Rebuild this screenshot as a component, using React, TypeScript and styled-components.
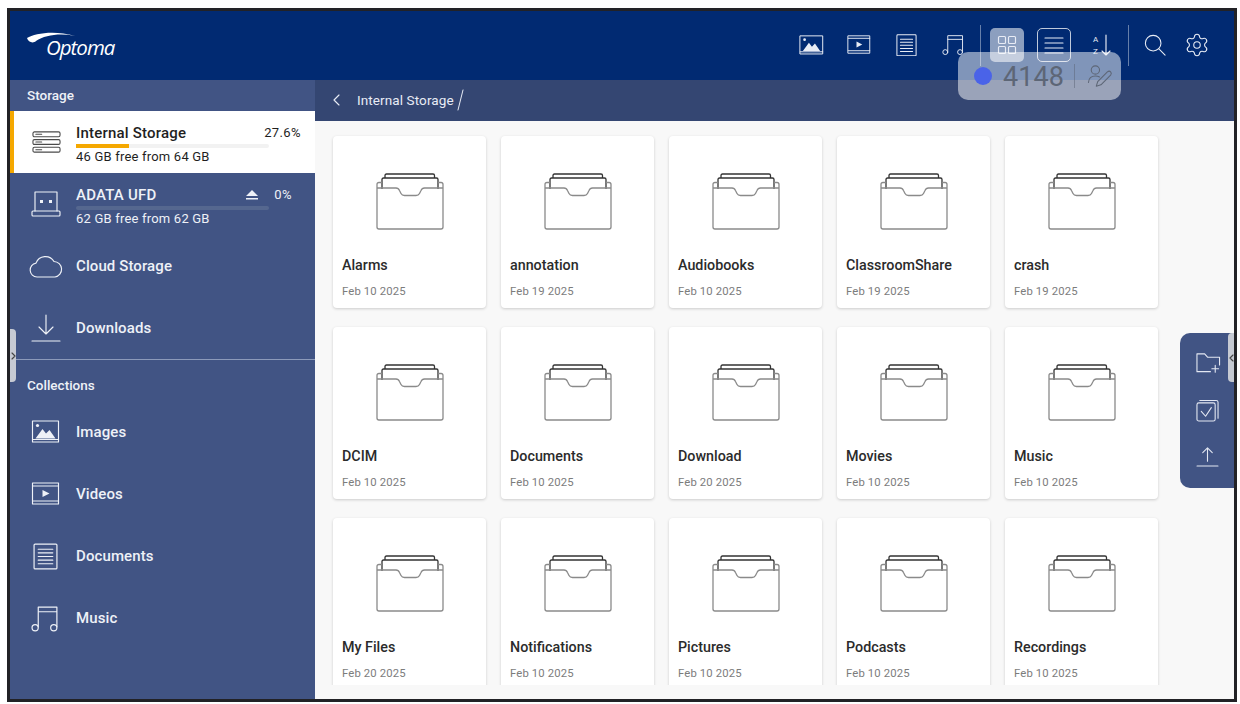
import React from 'react';
import styled, { createGlobalStyle } from 'styled-components';
import { Settings } from 'lucide-react';

const GlobalStyle = createGlobalStyle`
  html, body {
    margin: 0;
    padding: 0;
    background: #fff;
    font-family: Roboto, "Liberation Sans", sans-serif;
  }
`;

const Frame = styled.div`
  position: relative;
  width: 1224px;
  height: 688px;
  margin: 8px 0 0 7px;
  border: 3px solid #222226;
  display: flex;
  flex-direction: column;
  overflow: hidden;
  background: #f8f8f8;
`;

const Header = styled.header`
  height: 69px;
  flex: none;
  background: #012a72;
  display: flex;
  align-items: center;
  padding-left: 16px;
  color: #e8ecf5;
`;

const Logo = styled.div`
  position: relative;
  width: 100px;
  height: 44px;
`;

const Swoosh = styled.svg`
  position: absolute;
  left: 0;
  top: 6px;
`;

const LogoText = styled.span`
  position: absolute;
  left: 20px;
  top: 9px;
  font: italic 500 20.5px/28px "Open Sans", sans-serif;
  letter-spacing: -1px;
  color: #fff;
`;

const Toolbar = styled.div`
  margin-left: auto;
  display: flex;
  align-items: center;
  padding: 0 24px 1px 0;
  box-sizing: border-box;
  height: 100%;
`;

const ToolSlot = styled.div<{ $w: number; $gap?: number }>`
  width: ${(p) => p.$w}px;
  margin-right: ${(p) => p.$gap ?? 0}px;
  display: flex;
  justify-content: center;
  align-items: center;
  flex: none;

  svg {
    width: 100%;
    height: auto;
    display: block;
  }
`;

const ToolDivider = styled.div`
  width: 1px;
  height: 41px;
  background: rgba(255, 255, 255, 0.4);
  flex: none;
`;

const ViewButton = styled.div<{ $mode: 'filled' | 'outlined' }>`
  width: 34px;
  height: 34px;
  box-sizing: border-box;
  border-radius: 5px;
  display: flex;
  align-items: center;
  justify-content: center;
  flex: none;
  background: ${(p) => (p.$mode === 'filled' ? 'rgba(255,255,255,0.55)' : 'transparent')};
  border: ${(p) => (p.$mode === 'outlined' ? '1px solid rgba(255,255,255,0.75)' : 'none')};
`;

const Body = styled.div`
  flex: 1;
  display: flex;
  min-height: 0;
`;

const Sidebar = styled.aside`
  width: 305px;
  flex: none;
  background: #415484;
  color: #eef1f7;
  display: flex;
  flex-direction: column;
`;

const SectionTitle = styled.div<{ $h: number; $pt?: number; $pb?: number }>`
  height: ${(p) => p.$h}px;
  padding: ${(p) => p.$pt ?? 0}px 0 ${(p) => p.$pb ?? 0}px 17px;
  box-sizing: border-box;
  display: flex;
  align-items: center;
  font-size: 13.5px;
  font-weight: 500;
  flex: none;
`;

const NavRow = styled.div<{ $active?: boolean }>`
  height: 62px;
  flex: none;
  box-sizing: border-box;
  display: flex;
  align-items: center;
  background: ${(p) => (p.$active ? '#fff' : 'transparent')};
  color: ${(p) => (p.$active ? '#1f1f1f' : '#eef1f7')};
  border-left: 4px solid ${(p) => (p.$active ? '#f5a800' : 'transparent')};
`;

const NavIcon = styled.div<{ $pl?: number }>`
  width: 62px;
  padding-left: ${(p) => p.$pl ?? 17}px;
  box-sizing: border-box;
  display: flex;
  justify-content: flex-start;
  flex: none;
`;

const NavLabel = styled.span`
  font-size: 15px;
  font-weight: 500;
  letter-spacing: 0.1px;
`;

const StorageInfo = styled.div`
  width: 225px;
  padding-top: 4px;
  display: flex;
  flex-direction: column;
`;

const StorageTop = styled.div`
  display: flex;
  align-items: center;
  height: 20px;
  font-size: 15px;
  font-weight: 500;
  letter-spacing: 0.2px;
`;

const Percent = styled.span<{ $w: number; $right?: number; $tail?: boolean }>`
  margin-left: ${(p) => (p.$tail ? '0' : 'auto')};
  margin-right: ${(p) => p.$right ?? 0}px;
  width: ${(p) => p.$w}px;
  text-align: right;
  font-size: 13px;
  font-weight: 400;
  letter-spacing: 0.4px;
`;

const Meter = styled.div<{ $active?: boolean }>`
  width: 193px;
  height: 4px;
  margin-top: 1px;
  background: ${(p) => (p.$active ? '#f2f2f2' : '#55678f')};
  border-radius: 2px;
`;

const MeterFill = styled.div`
  height: 100%;
  background: #f5a800;
`;

const StorageSub = styled.div`
  font-size: 13px;
  line-height: 18px;
  letter-spacing: 0.2px;
`;

const Eject = styled.span`
  margin-left: auto;
  width: 14px;
  height: 10px;
  display: flex;
`;

const SideRule = styled.div`
  height: 1px;
  background: #8c9aba;
  flex: none;
`;

const Main = styled.main`
  flex: 1;
  min-width: 0;
  display: flex;
  flex-direction: column;
`;

const Breadcrumb = styled.div`
  height: 41px;
  flex: none;
  background: #344672;
  color: #e8ecf5;
  display: flex;
  align-items: center;
  padding: 0 0 1px 17px;
  box-sizing: border-box;
  font-size: 13.5px;
  letter-spacing: 0.1px;
`;

const CrumbText = styled.span`
  margin: 0 3px 0 17px;
`;

const FileArea = styled.div`
  height: 564px;
  overflow: hidden;
  padding: 15px 0 0 18px;
  box-sizing: border-box;
`;

const FileGrid = styled.div`
  display: grid;
  grid-template-columns: repeat(5, 153px);
  grid-auto-rows: 172px;
  column-gap: 15px;
  row-gap: 19px;
`;

const Card = styled.div`
  background: #fff;
  border-radius: 4px;
  box-shadow: 0 1px 3px rgba(0, 0, 0, 0.18);
  display: flex;
  flex-direction: column;
  padding: 36px 9px 0;
  box-sizing: border-box;
`;

const FolderWrap = styled.div`
  display: flex;
  justify-content: center;
  height: 58px;
  flex: none;
`;

const CardName = styled.div`
  margin-top: 26px;
  font-size: 14.3px;
  line-height: 18px;
  font-weight: 500;
  color: #2b2b2b;
`;

const CardDate = styled.div`
  margin-top: 10px;
  font-size: 11.3px;
  line-height: 16px;
  color: #7c7c7c;
  letter-spacing: 0.15px;
`;

const ActionRail = styled.div`
  position: absolute;
  right: 0;
  top: 322px;
  width: 54px;
  height: 155px;
  background: #415484;
  border-radius: 10px 0 0 10px;
  color: #e3e7f2;
  display: flex;
  flex-direction: column;
  align-items: flex-start;
  padding: 19px 0 0 16px;
  box-sizing: border-box;
  gap: 25px;

  svg {
    display: block;
  }
`;

const Handle = styled.div<{ $side: 'left' | 'right' }>`
  position: absolute;
  width: 6px;
  height: ${(p) => (p.$side === 'left' ? 53 : 49)}px;
  top: ${(p) => (p.$side === 'left' ? 318 : 322)}px;
  ${(p) => (p.$side === 'left' ? 'left: 0;' : 'right: 0;')}
  background: #c6cad3;
  border-radius: ${(p) => (p.$side === 'left' ? '0 4px 4px 0' : '4px 0 0 4px')};
  display: flex;
  align-items: center;
  justify-content: center;
`;

const CodePill = styled.div`
  position: absolute;
  left: 948px;
  top: 41px;
  width: 163px;
  height: 48px;
  border-radius: 10px;
  background: rgba(255, 255, 255, 0.5);
  display: flex;
  align-items: center;
  padding-left: 16px;
  box-sizing: border-box;
  color: #5d6676;
`;

const PillDot = styled.span`
  width: 18px;
  height: 18px;
  border-radius: 50%;
  background: #4a63e8;
  flex: none;
`;

const PillCode = styled.span`
  margin: 2px 0 0 11px;
  font-size: 27px;
  line-height: 32px;
  letter-spacing: 0.1px;
`;

const PillRule = styled.span`
  width: 1px;
  height: 24px;
  margin: 0 12px 0 10px;
  background: rgba(90, 100, 118, 0.5);
`;

const stroke = {
  fill: 'none',
  stroke: 'currentColor',
  strokeWidth: 1.15,
  strokeLinecap: 'round' as const,
  strokeLinejoin: 'round' as const,
};

const ImageIcon = () => (
  <svg width="29" height="24" viewBox="0 0 28 24">
    <rect x="1" y="1" width="26" height="21" {...stroke} />
    <path d="M1 19.5H27" {...stroke} />
    <circle cx="6" cy="5.5" r="1.6" fill="currentColor" />
    <path d="M4 18.5L11 9l3.5 4.5L18 10l6 8.5z" fill="currentColor" />
  </svg>
);

const VideoIcon = () => (
  <svg width="29" height="24" viewBox="0 0 28 24">
    <rect x="1" y="1" width="26" height="21" {...stroke} />
    <path d="M1 4H27M1 19H27" {...stroke} />
    <path d="M11 8l7 3.5-7 3.5z" fill="currentColor" />
  </svg>
);

const DocIcon = () => (
  <svg width="25" height="27" viewBox="0 0 24 26">
    <rect x="1" y="1" width="22" height="24" rx="1" {...stroke} />
    <path d="M5 6H19M5 9.5H19M5 13H19M5 16.5H19M5 20H19" {...stroke} />
  </svg>
);

const MusicIcon = () => (
  <svg width="29" height="27" viewBox="0 0 28 26">
    <path d="M7 21V2H25V21M7 6.5H25" {...stroke} />
    <circle cx="4" cy="22" r="3" {...stroke} />
    <circle cx="22" cy="22" r="3" {...stroke} />
  </svg>
);

const GridIcon = () => (
  <svg width="20" height="20" viewBox="0 0 20 20">
    <rect x="1.5" y="1.5" width="7" height="7" rx="1" {...stroke} />
    <rect x="11.5" y="1.5" width="7" height="7" rx="1" {...stroke} />
    <rect x="1.5" y="11.5" width="7" height="7" rx="1" {...stroke} />
    <rect x="11.5" y="11.5" width="7" height="7" rx="1" {...stroke} />
  </svg>
);

const ListIcon = () => (
  <svg width="20" height="18" viewBox="0 0 20 18">
    <path d="M1 2H19M1 7H19M1 12H19M1 17H19" {...stroke} />
  </svg>
);

const SortIcon = () => (
  <svg width="20" height="24" viewBox="0 0 20 24">
    <text x="1" y="9" fontSize="8" fill="currentColor" fontFamily="Roboto, sans-serif">A</text>
    <text x="1" y="21" fontSize="8" fill="currentColor" fontFamily="Roboto, sans-serif">Z</text>
    <path d="M14 2V22M10 18l4 4 4-4" {...stroke} />
  </svg>
);

const SearchIcon = () => (
  <svg width="24" height="24" viewBox="0 0 24 24">
    <circle cx="10" cy="10" r="8.5" {...stroke} />
    <path d="M16 16l7 7" {...stroke} />
  </svg>
);

const ServerIcon = () => (
  <svg width="29" height="24" viewBox="0 0 30 24" color="#4a4a4a">
    {[1.5, 9.5, 17.5].map((y) => (
      <g key={y}>
        <rect x="1" y={y} width="28" height="5" rx="1.5" {...stroke} />
        <path d={`M4 ${y + 2.5}H10`} {...stroke} />
      </g>
    ))}
  </svg>
);

const UsbIcon = () => (
  <svg width="30" height="28" viewBox="0 0 30 28">
    <path d="M4 21V2H26V21" {...stroke} />
    <rect x="1" y="21" width="28" height="5" rx="1" {...stroke} />
    <rect x="9" y="10" width="3" height="3" fill="currentColor" />
    <rect x="18" y="10" width="3" height="3" fill="currentColor" />
  </svg>
);

const CloudIcon = () => (
  <svg width="34" height="24" viewBox="0 0 34 24">
    <path
      d="M8 23a7 7 0 0 1-1-13.900A10 10 0 0 1 25 7.500 7.800 7.800 0 0 1 26 23z"
      {...stroke}
    />
  </svg>
);

const DownloadIcon = () => (
  <svg width="30" height="28" viewBox="0 0 30 28">
    <path d="M15 1V20M8 13l7 7 7-7M1 27H29" {...stroke} />
  </svg>
);

const BackChevron = () => (
  <svg width="8" height="12" viewBox="0 0 8 12">
    <path d="M7 1L2 6l5 5" {...stroke} />
  </svg>
);

const CrumbSlash = () => (
  <svg width="7" height="22" viewBox="0 0 7 22">
    <path d="M6 1L1 21" {...stroke} strokeWidth={1} />
  </svg>
);

const EjectIcon = () => (
  <svg width="14" height="10" viewBox="0 0 14 10">
    <path d="M7 0l6 6H1z M1 8h12v1.500H1z" fill="currentColor" />
  </svg>
);

const FolderIcon = () => (
  <svg width="68" height="58" viewBox="0 0 68 58">
    <path
      d="M9 6V3.500Q9 2 10.500 2H57Q58.500 2 58.500 3.500V6"
      fill="none"
      stroke="#333"
      strokeWidth="1.3"
    />
    <path
      d="M6 17V7.500Q6 6 7.500 6H60.500Q62 6 62 7.500V17"
      fill="none"
      stroke="#333"
      strokeWidth="1.3"
    />
    <path
      d="M6 10.500H3Q1 10.500 1 12.500V55Q1 57 3 57H65Q67 57 67 55V12.500Q67 10.500 65 10.500H62"
      fill="none"
      stroke="#8a8a8a"
      strokeWidth="1.3"
    />
    <path
      d="M1 16H20Q22.500 16 23.500 18.500L25 21.500Q26 23.500 28.500 23.500H40Q42.500 23.500 43.500 21.500L45 18.500Q46 16 48.500 16H67"
      fill="none"
      stroke="#8a8a8a"
      strokeWidth="1.3"
    />
  </svg>
);

const NewFolderIcon = () => (
  <svg width="25" height="22" viewBox="0 0 26 22">
    <path d="M1 20V1.500H9l3 3.500H24.500V13M1 20H15" {...stroke} />
    <path d="M20 13.500V20.500M16.500 17H23.500" {...stroke} />
  </svg>
);

const SelectIcon = () => (
  <svg width="23" height="23" viewBox="0 0 24 24">
    <rect x="1" y="4" width="19" height="19" rx="2" {...stroke} />
    <path d="M4 1.500H21Q23 1.500 23 3.500V20" {...stroke} />
    <path d="M5.500 13l4.500 5 6-9" {...stroke} />
  </svg>
);

const UploadIcon = () => (
  <svg width="23" height="20" viewBox="0 0 24 21">
    <path d="M12 1V15M7 6l5-5 5 5M1 20H23" {...stroke} />
  </svg>
);

const AnnotateIcon = () => (
  <svg width="26" height="24" viewBox="0 0 28 26">
    <circle cx="9" cy="6.500" r="4.500" {...stroke} />
    <path d="M1.500 20Q2 13 9 13q2.500 0 4.500 1" {...stroke} />
    <path d="M10 24l1.500-5L22 8.500q2-1.500 3.500 0t0 3.500L15 22.500z" {...stroke} />
  </svg>
);

const SmallChevron = ({ dir }: { dir: 'left' | 'right' }) => (
  <svg width="5" height="8" viewBox="0 0 5 8" color="#444">
    <path d={dir === 'left' ? 'M4 1L1 4l3 3' : 'M1 1l3 3-3 3'} {...stroke} />
  </svg>
);

const folders = [
  ['Alarms', 'Feb 10 2025'],
  ['annotation', 'Feb 19 2025'],
  ['Audiobooks', 'Feb 10 2025'],
  ['ClassroomShare', 'Feb 19 2025'],
  ['crash', 'Feb 19 2025'],
  ['DCIM', 'Feb 10 2025'],
  ['Documents', 'Feb 10 2025'],
  ['Download', 'Feb 20 2025'],
  ['Movies', 'Feb 10 2025'],
  ['Music', 'Feb 10 2025'],
  ['My Files', 'Feb 20 2025'],
  ['Notifications', 'Feb 10 2025'],
  ['Pictures', 'Feb 10 2025'],
  ['Podcasts', 'Feb 10 2025'],
  ['Recordings', 'Feb 10 2025'],
];

const collections = [
  { label: 'Images', icon: <ImageIcon />, pl: 17 },
  { label: 'Videos', icon: <VideoIcon />, pl: 17 },
  { label: 'Documents', icon: <DocIcon />, pl: 19 },
  { label: 'Music', icon: <MusicIcon />, pl: 17 },
];

const App: React.FC = () => (
  <>
    <GlobalStyle />
    <Frame>
      <Header>
        <Logo>
          <Swoosh width="52" height="16" viewBox="0 0 52 16">
            <path d="M1 8C9 3 29 0 49 6 34 3 19 5 10 11 7 14 2 12 1 8z" fill="#fff" />
          </Swoosh>
          <LogoText>Optoma</LogoText>
        </Logo>
        <Toolbar>
          <ToolSlot $w={25} $gap={23}><ImageIcon /></ToolSlot>
          <ToolSlot $w={24} $gap={25}><VideoIcon /></ToolSlot>
          <ToolSlot $w={21} $gap={25}><DocIcon /></ToolSlot>
          <ToolSlot $w={23} $gap={15}><MusicIcon /></ToolSlot>
          <ToolDivider />
          <ToolSlot $w={9} />
          <ViewButton $mode="filled"><GridIcon /></ViewButton>
          <ToolSlot $w={13} />
          <ViewButton $mode="outlined"><ListIcon /></ViewButton>
          <ToolSlot $w={21} />
          <ToolSlot $w={20} $gap={16}><SortIcon /></ToolSlot>
          <ToolDivider />
          <ToolSlot $w={15} />
          <ToolSlot $w={22} $gap={18}><SearchIcon /></ToolSlot>
          <ToolSlot $w={26}><Settings strokeWidth={1} /></ToolSlot>
        </Toolbar>
      </Header>
      <Body>
        <Sidebar>
          <SectionTitle $h={31} $pb={2}>Storage</SectionTitle>
          <NavRow $active>
            <NavIcon $pl={18}><ServerIcon /></NavIcon>
            <StorageInfo>
              <StorageTop>
                Internal Storage
                <Percent $w={60}>27.6%</Percent>
              </StorageTop>
              <Meter $active><MeterFill style={{ width: '27.6%' }} /></Meter>
              <StorageSub>46 GB free from 64 GB</StorageSub>
            </StorageInfo>
          </NavRow>
          <NavRow>
            <NavIcon><UsbIcon /></NavIcon>
            <StorageInfo>
              <StorageTop>
                ADATA UFD
                <Eject><EjectIcon /></Eject>
                <Percent $w={33} $right={9} $tail>0%</Percent>
              </StorageTop>
              <Meter />
              <StorageSub>62 GB free from 62 GB</StorageSub>
            </StorageInfo>
          </NavRow>
          <NavRow>
            <NavIcon $pl={15}><CloudIcon /></NavIcon>
            <NavLabel>Cloud Storage</NavLabel>
          </NavRow>
          <NavRow>
            <NavIcon><DownloadIcon /></NavIcon>
            <NavLabel>Downloads</NavLabel>
          </NavRow>
          <SideRule />
          <SectionTitle $h={41} $pt={9}>Collections</SectionTitle>
          {collections.map((item) => (
            <NavRow key={item.label}>
              <NavIcon $pl={item.pl}>{item.icon}</NavIcon>
              <NavLabel>{item.label}</NavLabel>
            </NavRow>
          ))}
        </Sidebar>
        <Main>
          <Breadcrumb>
            <BackChevron />
            <CrumbText>Internal Storage</CrumbText>
            <CrumbSlash />
          </Breadcrumb>
          <FileArea>
            <FileGrid>
              {folders.map(([name, date]) => (
                <Card key={name}>
                  <FolderWrap><FolderIcon /></FolderWrap>
                  <CardName>{name}</CardName>
                  <CardDate>{date}</CardDate>
                </Card>
              ))}
            </FileGrid>
          </FileArea>
        </Main>
      </Body>
      <CodePill>
        <PillDot />
        <PillCode>4148</PillCode>
        <PillRule />
        <AnnotateIcon />
      </CodePill>
      <ActionRail>
        <NewFolderIcon />
        <SelectIcon />
        <UploadIcon />
      </ActionRail>
      <Handle $side="left"><SmallChevron dir="right" /></Handle>
      <Handle $side="right"><SmallChevron dir="left" /></Handle>
    </Frame>
  </>
);

export default App;
